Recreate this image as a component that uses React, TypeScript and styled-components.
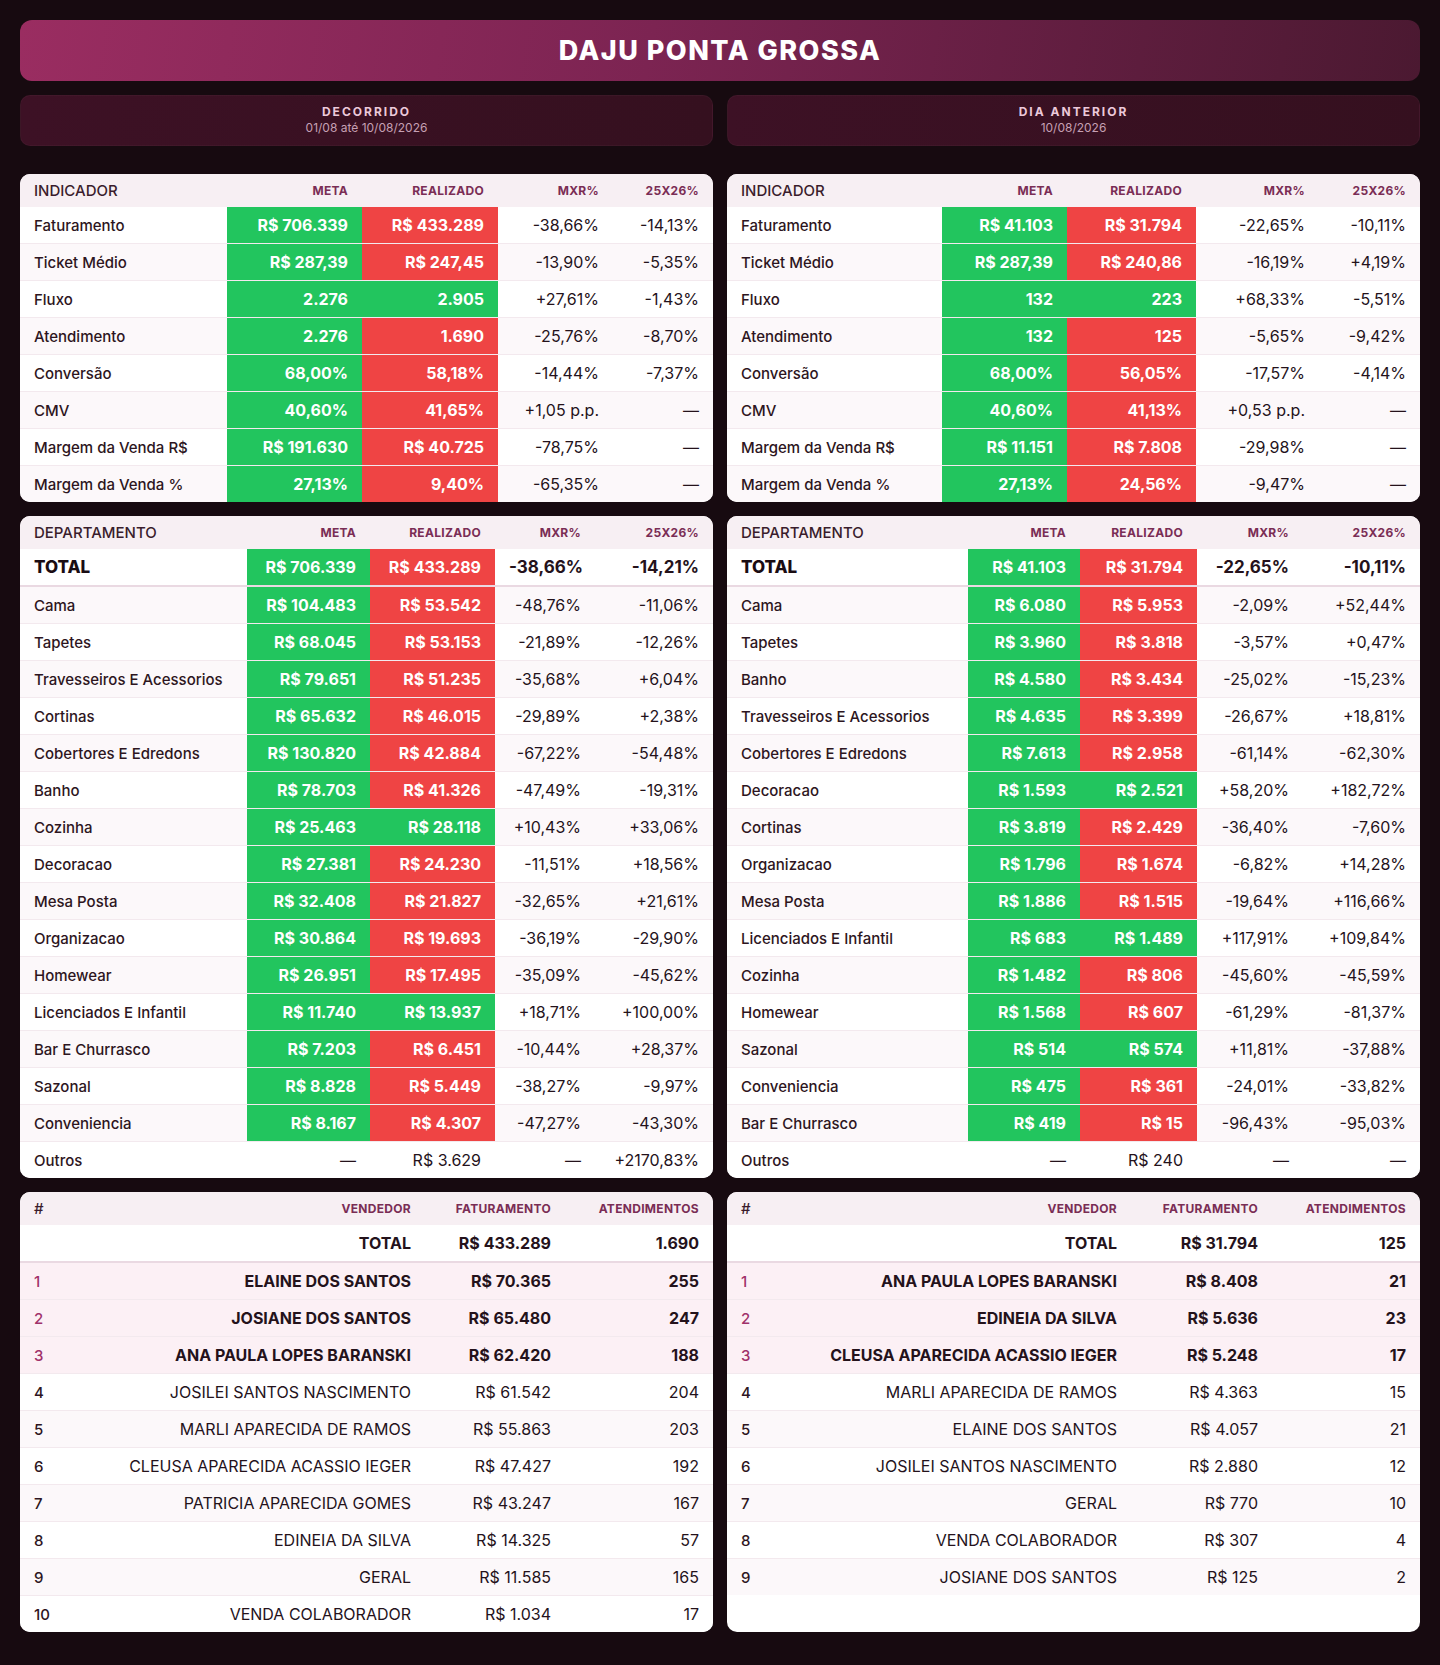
import styled, { createGlobalStyle } from "styled-components";
import { Fragment } from "react";

const GlobalStyle = createGlobalStyle`
  * { box-sizing: border-box; }
  body {
    margin: 0;
    background: #170a10;
    font-family: Inter, "Noto Sans", "Liberation Sans", sans-serif;
    color: #24121b;
  }
`;

const Page = styled.div`
  padding: 20px 20px 32px;
`;

const Banner = styled.header`
  height: 61px;
  border-radius: 12px;
  background: linear-gradient(100deg, #9a2d61 0%, #7c2452 45%, #4b1931 100%);
  display: flex;
  align-items: center;
  justify-content: center;
`;

const Title = styled.h1`
  margin: 0;
  color: #ffffff;
  font-size: 27px;
  font-weight: 800;
  letter-spacing: 1.5px;
`;

const Row = styled.div<{ $top: number }>`
  display: grid;
  grid-template-columns: 1fr 1fr;
  gap: 14px;
  margin-top: ${(p) => p.$top}px;
`;

const PeriodBox = styled.div`
  height: 51px;
  border-radius: 10px;
  background: linear-gradient(90deg, #3d1125 0%, #35101f 100%);
  border: 1px solid rgba(255, 255, 255, 0.03);
  display: flex;
  flex-direction: column;
  align-items: center;
  justify-content: center;
  gap: 1px;
  padding-bottom: 2px;
`;

const PeriodTitle = styled.div`
  color: #ecc9da;
  font-size: 12px;
  font-weight: 700;
  letter-spacing: 2px;
  line-height: 15px;
`;

const PeriodDate = styled.div`
  color: #c6a0b4;
  font-size: 12px;
  line-height: 15px;
`;

const Card = styled.div`
  background: #ffffff;
  border-radius: 10px;
  overflow: hidden;
`;

const Table = styled.table`
  width: 100%;
  table-layout: fixed;
  border-collapse: separate;
  border-spacing: 0;

  tbody > tr:last-child > td {
    border-bottom: none;
    height: 36px;
  }
`;

const HeadCell = styled.th<{ $first?: boolean }>`
  background: #f7eff3;
  height: 33px;
  padding: 0 14px;
  text-align: ${(p) => (p.$first ? "left" : "right")};
  color: ${(p) => (p.$first ? "#3a1c2c" : "#7a2d55")};
  font-size: ${(p) => (p.$first ? "15px" : "12px")};
  font-weight: ${(p) => (p.$first ? 500 : 700)};
  letter-spacing: ${(p) => (p.$first ? "0" : "0.3px")};
  text-transform: uppercase;
`;

type Tone = "g" | "r" | undefined;

const BodyRow = styled.tr<{
  $stripe?: boolean;
  $top?: boolean;
  $total?: boolean;
}>`
  background: ${(p) =>
    p.$top ? "#fcf0f5" : p.$stripe ? "#fcf8fa" : "#ffffff"};

  & > td {
    height: ${(p) => (p.$total ? 38 : 37)}px;
    border-bottom: ${(p) =>
      p.$total ? "2px solid #ead9e2" : "1px solid #f3e9ee"};
  }
`;

const Cell = styled.td<{ $tone?: Tone; $bold?: boolean; $left?: boolean; $size?: number }>`
  padding: 0 14px;
  text-align: ${(p) => (p.$left ? "left" : "right")};
  font-size: ${(p) => p.$size ?? 16}px;
  font-weight: ${(p) => (p.$tone ? 700 : p.$bold ? 700 : 400)};
  white-space: nowrap;
  color: ${(p) => (p.$tone ? "#ffffff" : "#24121b")};
  background: ${(p) =>
    p.$tone === "g" ? "#22c55e" : p.$tone === "r" ? "#ef4444" : "transparent"};
`;

const Label = styled(Cell)<{ $strong?: boolean }>`
  font-size: ${(p) => (p.$strong ? 17 : 15)}px;
  font-weight: ${(p) => (p.$strong ? 800 : 500)};
  color: ${(p) => (p.$strong ? "#1a0c13" : "#2d1521")};
`;

const Rank = styled(Cell)<{ $top?: boolean }>`
  font-size: 15px;
  font-weight: 500;
  color: ${(p) => (p.$top ? "#a0306a" : "#2d1521")};
`;

type MetricRow = [string, string, string, Tone, string, string];

const indicadorDecorrido: MetricRow[] = [
  ["Faturamento", "R$ 706.339", "R$ 433.289", "r", "-38,66%", "-14,13%"],
  ["Ticket Médio", "R$ 287,39", "R$ 247,45", "r", "-13,90%", "-5,35%"],
  ["Fluxo", "2.276", "2.905", "g", "+27,61%", "-1,43%"],
  ["Atendimento", "2.276", "1.690", "r", "-25,76%", "-8,70%"],
  ["Conversão", "68,00%", "58,18%", "r", "-14,44%", "-7,37%"],
  ["CMV", "40,60%", "41,65%", "r", "+1,05 p.p.", "—"],
  ["Margem da Venda R$", "R$ 191.630", "R$ 40.725", "r", "-78,75%", "—"],
  ["Margem da Venda %", "27,13%", "9,40%", "r", "-65,35%", "—"],
];

const indicadorAnterior: MetricRow[] = [
  ["Faturamento", "R$ 41.103", "R$ 31.794", "r", "-22,65%", "-10,11%"],
  ["Ticket Médio", "R$ 287,39", "R$ 240,86", "r", "-16,19%", "+4,19%"],
  ["Fluxo", "132", "223", "g", "+68,33%", "-5,51%"],
  ["Atendimento", "132", "125", "r", "-5,65%", "-9,42%"],
  ["Conversão", "68,00%", "56,05%", "r", "-17,57%", "-4,14%"],
  ["CMV", "40,60%", "41,13%", "r", "+0,53 p.p.", "—"],
  ["Margem da Venda R$", "R$ 11.151", "R$ 7.808", "r", "-29,98%", "—"],
  ["Margem da Venda %", "27,13%", "24,56%", "r", "-9,47%", "—"],
];

const deptDecorrido: MetricRow[] = [
  ["TOTAL", "R$ 706.339", "R$ 433.289", "r", "-38,66%", "-14,21%"],
  ["Cama", "R$ 104.483", "R$ 53.542", "r", "-48,76%", "-11,06%"],
  ["Tapetes", "R$ 68.045", "R$ 53.153", "r", "-21,89%", "-12,26%"],
  ["Travesseiros E Acessorios", "R$ 79.651", "R$ 51.235", "r", "-35,68%", "+6,04%"],
  ["Cortinas", "R$ 65.632", "R$ 46.015", "r", "-29,89%", "+2,38%"],
  ["Cobertores E Edredons", "R$ 130.820", "R$ 42.884", "r", "-67,22%", "-54,48%"],
  ["Banho", "R$ 78.703", "R$ 41.326", "r", "-47,49%", "-19,31%"],
  ["Cozinha", "R$ 25.463", "R$ 28.118", "g", "+10,43%", "+33,06%"],
  ["Decoracao", "R$ 27.381", "R$ 24.230", "r", "-11,51%", "+18,56%"],
  ["Mesa Posta", "R$ 32.408", "R$ 21.827", "r", "-32,65%", "+21,61%"],
  ["Organizacao", "R$ 30.864", "R$ 19.693", "r", "-36,19%", "-29,90%"],
  ["Homewear", "R$ 26.951", "R$ 17.495", "r", "-35,09%", "-45,62%"],
  ["Licenciados E Infantil", "R$ 11.740", "R$ 13.937", "g", "+18,71%", "+100,00%"],
  ["Bar E Churrasco", "R$ 7.203", "R$ 6.451", "r", "-10,44%", "+28,37%"],
  ["Sazonal", "R$ 8.828", "R$ 5.449", "r", "-38,27%", "-9,97%"],
  ["Conveniencia", "R$ 8.167", "R$ 4.307", "r", "-47,27%", "-43,30%"],
  ["Outros", "—", "R$ 3.629", undefined, "—", "+2170,83%"],
];

const deptAnterior: MetricRow[] = [
  ["TOTAL", "R$ 41.103", "R$ 31.794", "r", "-22,65%", "-10,11%"],
  ["Cama", "R$ 6.080", "R$ 5.953", "r", "-2,09%", "+52,44%"],
  ["Tapetes", "R$ 3.960", "R$ 3.818", "r", "-3,57%", "+0,47%"],
  ["Banho", "R$ 4.580", "R$ 3.434", "r", "-25,02%", "-15,23%"],
  ["Travesseiros E Acessorios", "R$ 4.635", "R$ 3.399", "r", "-26,67%", "+18,81%"],
  ["Cobertores E Edredons", "R$ 7.613", "R$ 2.958", "r", "-61,14%", "-62,30%"],
  ["Decoracao", "R$ 1.593", "R$ 2.521", "g", "+58,20%", "+182,72%"],
  ["Cortinas", "R$ 3.819", "R$ 2.429", "r", "-36,40%", "-7,60%"],
  ["Organizacao", "R$ 1.796", "R$ 1.674", "r", "-6,82%", "+14,28%"],
  ["Mesa Posta", "R$ 1.886", "R$ 1.515", "r", "-19,64%", "+116,66%"],
  ["Licenciados E Infantil", "R$ 683", "R$ 1.489", "g", "+117,91%", "+109,84%"],
  ["Cozinha", "R$ 1.482", "R$ 806", "r", "-45,60%", "-45,59%"],
  ["Homewear", "R$ 1.568", "R$ 607", "r", "-61,29%", "-81,37%"],
  ["Sazonal", "R$ 514", "R$ 574", "g", "+11,81%", "-37,88%"],
  ["Conveniencia", "R$ 475", "R$ 361", "r", "-24,01%", "-33,82%"],
  ["Bar E Churrasco", "R$ 419", "R$ 15", "r", "-96,43%", "-95,03%"],
  ["Outros", "—", "R$ 240", undefined, "—", "—"],
];

type Seller = [string, string, string];

const vendDecorrido = {
  total: ["R$ 433.289", "1.690"],
  rows: [
    ["ELAINE DOS SANTOS", "R$ 70.365", "255"],
    ["JOSIANE DOS SANTOS", "R$ 65.480", "247"],
    ["ANA PAULA LOPES BARANSKI", "R$ 62.420", "188"],
    ["JOSILEI SANTOS NASCIMENTO", "R$ 61.542", "204"],
    ["MARLI APARECIDA DE RAMOS", "R$ 55.863", "203"],
    ["CLEUSA APARECIDA ACASSIO IEGER", "R$ 47.427", "192"],
    ["PATRICIA APARECIDA GOMES", "R$ 43.247", "167"],
    ["EDINEIA DA SILVA", "R$ 14.325", "57"],
    ["GERAL", "R$ 11.585", "165"],
    ["VENDA COLABORADOR", "R$ 1.034", "17"],
  ] as Seller[],
};

const vendAnterior = {
  total: ["R$ 31.794", "125"],
  rows: [
    ["ANA PAULA LOPES BARANSKI", "R$ 8.408", "21"],
    ["EDINEIA DA SILVA", "R$ 5.636", "23"],
    ["CLEUSA APARECIDA ACASSIO IEGER", "R$ 5.248", "17"],
    ["MARLI APARECIDA DE RAMOS", "R$ 4.363", "15"],
    ["ELAINE DOS SANTOS", "R$ 4.057", "21"],
    ["JOSILEI SANTOS NASCIMENTO", "R$ 2.880", "12"],
    ["GERAL", "R$ 770", "10"],
    ["VENDA COLABORADOR", "R$ 307", "4"],
    ["JOSIANE DOS SANTOS", "R$ 125", "2"],
  ] as Seller[],
};

const Cols = ({ widths }: { widths: number[] }) => (
  <colgroup>
    {widths.map((w, i) => (
      <col key={i} style={{ width: w }} />
    ))}
  </colgroup>
);

const MetricTable = ({
  title,
  rows,
  widths,
  withTotal,
}: {
  title: string;
  rows: MetricRow[];
  widths: number[];
  withTotal?: boolean;
}) => (
  <Card>
    <Table>
      <Cols widths={widths} />
      <thead>
        <tr>
          <HeadCell $first>{title}</HeadCell>
          <HeadCell>Meta</HeadCell>
          <HeadCell>Realizado</HeadCell>
          <HeadCell>MXR%</HeadCell>
          <HeadCell>25X26%</HeadCell>
        </tr>
      </thead>
      <tbody>
        {rows.map(([label, meta, real, tone, mxr, yoy], i) => {
          const total = withTotal && i === 0;
          return (
            <BodyRow key={label} $total={total} $stripe={!total && i % 2 === 1}>
              <Label $left $strong={total}>
                {label}
              </Label>
              <Cell $tone={tone ? "g" : undefined}>{meta}</Cell>
              <Cell $tone={tone}>{real}</Cell>
              <Cell $bold={total} $size={total ? 17 : 16}>
                {mxr}
              </Cell>
              <Cell $bold={total} $size={total ? 17 : 16}>
                {yoy}
              </Cell>
            </BodyRow>
          );
        })}
      </tbody>
    </Table>
  </Card>
);

const SellerTable = ({
  data,
  widths,
}: {
  data: { total: string[]; rows: Seller[] };
  widths: number[];
}) => (
  <Card>
    <Table>
      <Cols widths={widths} />
      <thead>
        <tr>
          <HeadCell $first>#</HeadCell>
          <HeadCell>Vendedor</HeadCell>
          <HeadCell>Faturamento</HeadCell>
          <HeadCell>Atendimentos</HeadCell>
        </tr>
      </thead>
      <tbody>
        <BodyRow $total>
          <Cell $left />
          <Cell $bold>TOTAL</Cell>
          <Cell $bold>{data.total[0]}</Cell>
          <Cell $bold>{data.total[1]}</Cell>
        </BodyRow>
        {data.rows.map(([name, fat, atend], i) => {
          const top = i < 3;
          return (
            <BodyRow key={name} $top={top} $stripe={i % 2 === 0}>
              <Rank $left $top={top}>
                {i + 1}
              </Rank>
              <Cell $bold={top}>{name}</Cell>
              <Cell $bold={top}>{fat}</Cell>
              <Cell $bold={top}>{atend}</Cell>
            </BodyRow>
          );
        })}
      </tbody>
    </Table>
  </Card>
);

const App = () => (
  <Fragment>
    <GlobalStyle />
    <Page>
      <Banner>
        <Title>DAJU PONTA GROSSA</Title>
      </Banner>

      <Row $top={14}>
        <PeriodBox>
          <PeriodTitle>DECORRIDO</PeriodTitle>
          <PeriodDate>01/08 até 10/08/2026</PeriodDate>
        </PeriodBox>
        <PeriodBox>
          <PeriodTitle>DIA ANTERIOR</PeriodTitle>
          <PeriodDate>10/08/2026</PeriodDate>
        </PeriodBox>
      </Row>

      <Row $top={28}>
        <MetricTable
          title="Indicador"
          rows={indicadorDecorrido}
          widths={[207, 135, 136, 115, 100]}
        />
        <MetricTable
          title="Indicador"
          rows={indicadorAnterior}
          widths={[215, 125, 129, 123, 101]}
        />
      </Row>

      <Row $top={14}>
        <MetricTable
          title="Departamento"
          rows={deptDecorrido}
          widths={[227, 123, 125, 100, 118]}
          withTotal
        />
        <MetricTable
          title="Departamento"
          rows={deptAnterior}
          widths={[241, 112, 117, 106, 117]}
          withTotal
        />
      </Row>

      <Row $top={14}>
        <SellerTable data={vendDecorrido} widths={[60, 345, 140, 148]} />
        <SellerTable data={vendAnterior} widths={[60, 344, 141, 148]} />
      </Row>
    </Page>
  </Fragment>
);

export default App;
